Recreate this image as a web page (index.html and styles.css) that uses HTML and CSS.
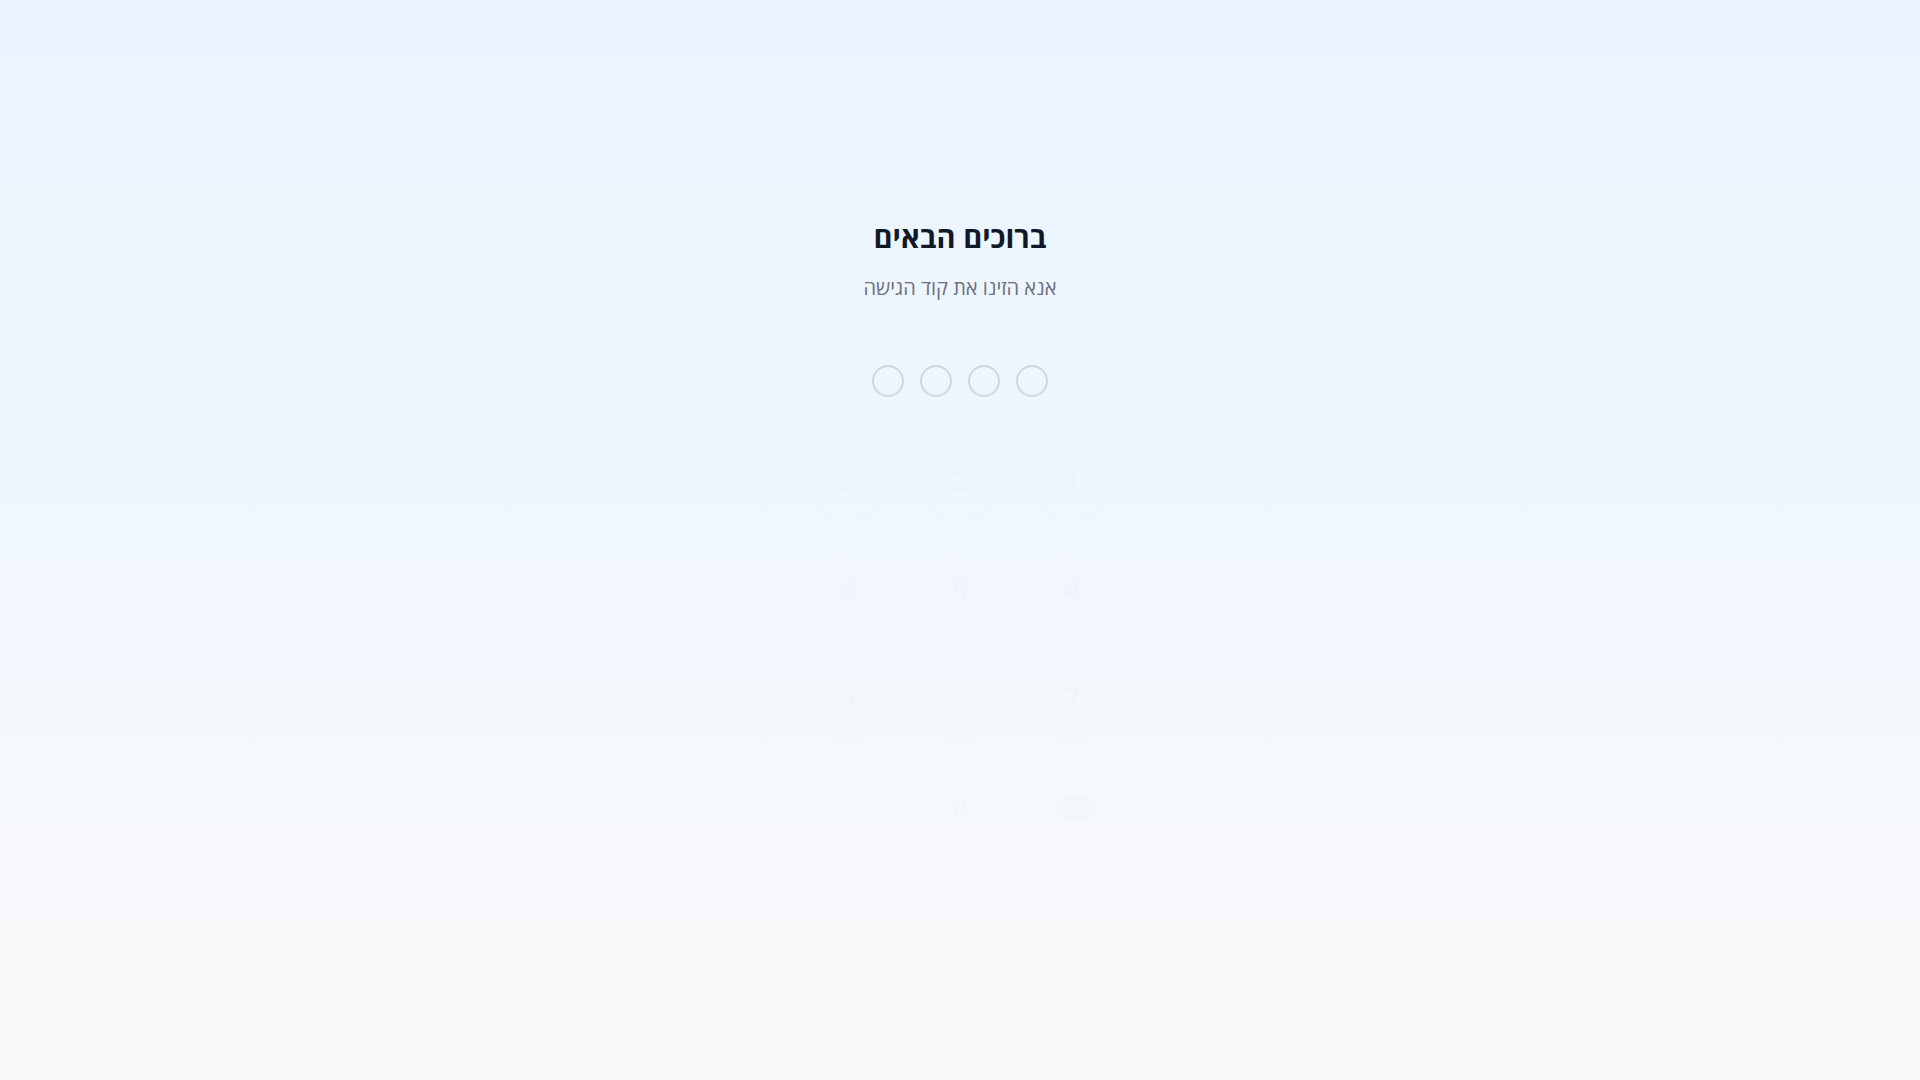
FILE: index.html
```html
<!DOCTYPE html>
<html lang="he" dir="rtl">
<head>
<meta charset="utf-8">
<title>ברוכים הבאים</title>
<link rel="stylesheet" href="styles.css">
</head>
<body>
<main class="screen">
  <section class="login">
    <h1 class="title">ברוכים הבאים</h1>
    <p class="subtitle">אנא הזינו את קוד הגישה</p>
    <div class="dots">
      <span class="dot"></span>
      <span class="dot"></span>
      <span class="dot"></span>
      <span class="dot"></span>
    </div>
    <div class="keypad">
      <button class="key">1</button>
      <button class="key">2</button>
      <button class="key">3</button>
      <button class="key">4</button>
      <button class="key">5</button>
      <button class="key">6</button>
      <button class="key">7</button>
      <button class="key">8</button>
      <button class="key">9</button>
      <button class="key">⌫</button>
      <button class="key">0</button>
      <span class="key-empty"></span>
    </div>
  </section>
</main>
</body>
</html>
```

FILE: styles.css
```css
* { box-sizing: border-box; }
html, body { margin: 0; height: 100%; }
body {
  font-family: "Open Sans", "DejaVu Sans", sans-serif;
  background: linear-gradient(180deg, #eaf4ff 0%, #f0f6fe 45%, #f8fafc 85%, #f8fafc 100%);
  color: #111827;
}
.screen {
  min-height: 100vh;
  display: flex;
  justify-content: center;
}
.login {
  padding-top: 219px;
  display: flex;
  flex-direction: column;
  align-items: center;
}
.title {
  margin: 0;
  font-size: 29px;
  line-height: 36px;
  font-weight: 700;
  color: #111827;
}
.subtitle {
  margin: 19px 0 0;
  font-size: 20px;
  line-height: 28px;
  color: #6b7280;
}
.dots {
  margin-top: 63px;
  display: flex;
  gap: 16px;
}
.dot {
  width: 32px;
  height: 32px;
  border-radius: 50%;
  border: 2px solid #d3d6dd;
}
.keypad {
  margin-top: 43px;
  display: grid;
  grid-template-columns: repeat(3, 80px);
  grid-auto-rows: 80px;
  column-gap: 32px;
  row-gap: 29px;
  opacity: 0.012;
  filter: blur(1px);
}
.key {
  width: 80px;
  height: 80px;
  border-radius: 50%;
  border: 1px solid #9ca3af;
  background: #ffffff;
  font-family: "Open Sans", "DejaVu Sans", sans-serif;
  font-size: 28px;
  color: #111827;
  padding: 0;
}
```
